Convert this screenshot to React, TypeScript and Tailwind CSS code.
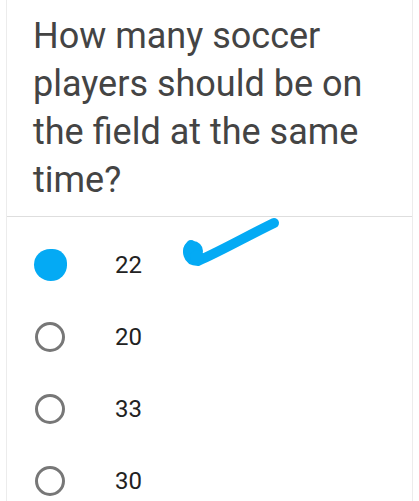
const options = [
  { label: "22", selected: true },
  { label: "20", selected: false },
  { label: "33", selected: false },
  { label: "30", selected: false },
];

export default function App() {
  return (
    <div className="h-[501px] w-[419px] overflow-hidden bg-white font-['Roboto',sans-serif]">
      <div className="relative mx-[6px] h-full border-x border-[#ececec] bg-white">
        <h1 className="px-[26px] pt-[12px] pb-[12px] text-[36px] leading-[48px] font-normal text-[#444444]">
          How many soccer players should be on the field at the same time?
        </h1>
        <div className="border-t border-[#dedede]" />
        <ul className="pt-[12px]">
          {options.map((o) => (
            <li key={o.label} className="flex h-[72px] items-center">
              <div className="flex w-[86px] justify-center">
                {o.selected ? (
                  <div className="h-[32px] w-[33px] rounded-[50%_45%_50%_52%] bg-[#04aaf4]" />
                ) : (
                  <div className="h-[30px] w-[30px] rounded-full border-[3px] border-[#777777]" />
                )}
              </div>
              <span className="pl-[22px] text-[24px] text-[#222222]">{o.label}</span>
            </li>
          ))}
        </ul>
        {/* hand-drawn tick next to the picked answer */}
        <svg
          className="absolute left-[164px] top-[205px]"
          width="115"
          height="70"
          viewBox="0 0 115 70"
        >
          <path
            d="M20 40 C 15 45, 16 56, 27 56 C 50 46, 78 30, 103 18"
            fill="none"
            stroke="#04aaf4"
            strokeWidth="10"
            strokeLinecap="round"
          />
          <circle cx="22" cy="46" r="10" fill="#04aaf4" />
          <circle cx="26" cy="52" r="7" fill="#04aaf4" />
        </svg>
      </div>
    </div>
  );
}
